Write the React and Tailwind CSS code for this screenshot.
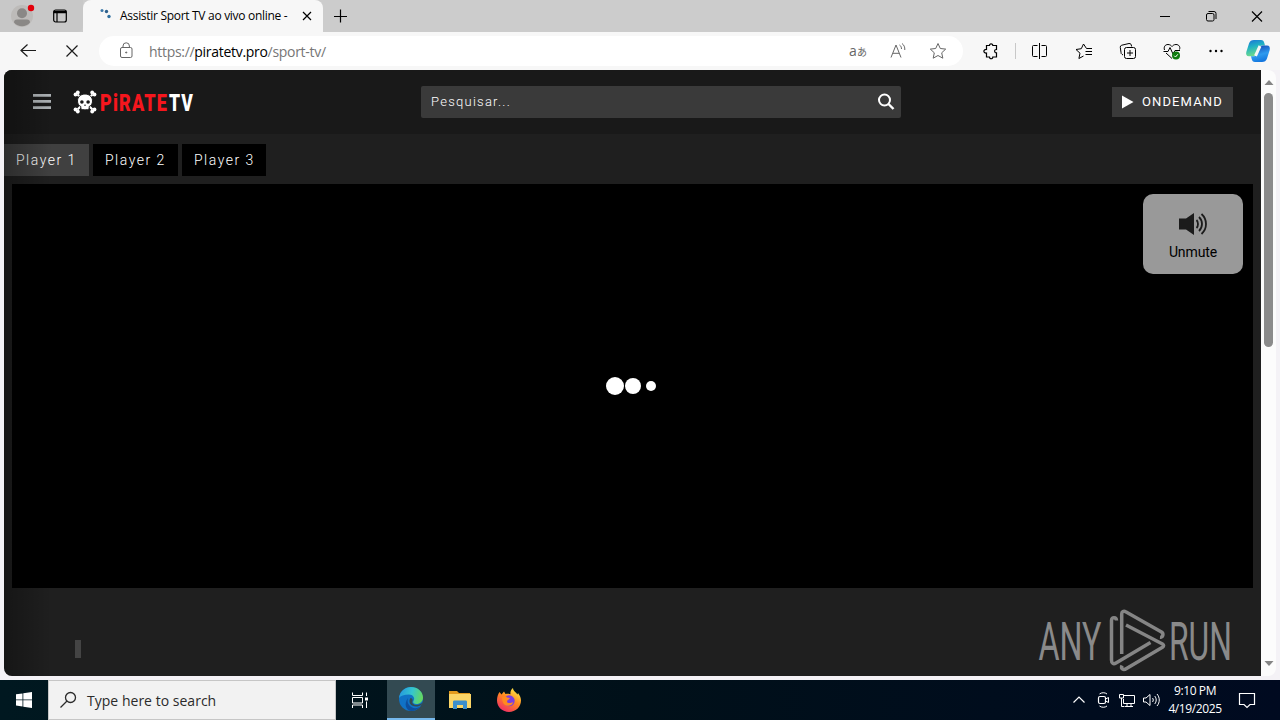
function Icon({ size = 20, className = "", children }) {
  return (
    <svg
      width={size}
      height={size}
      viewBox={`0 0 ${size} ${size}`}
      fill="none"
      stroke="currentColor"
      className={`shrink-0 ${className}`}
    >
      {children}
    </svg>
  );
}

function TabStrip() {
  return (
    <div className="flex h-8 bg-[#cccccc]">
      <div className="flex w-[83px] items-center rounded-br-md bg-[#c8c8c8]">
        <svg width="32" height="32" viewBox="0 0 32 32" className="ml-2">
          <circle cx="14" cy="16" r="11" fill="#bdbbb9" />
          <circle cx="14" cy="13.200" r="5" fill="#8a8886" />
          <path d="M6 22.500c0-2 1-3 3-3h10c2 0 3 1 3 3-2 2.700-5 3.700-8 3.700s-6-1-8-3.700z" fill="#8a8886" />
          <circle cx="23" cy="8" r="3.200" fill="#e3000b" />
        </svg>
        <Icon size={16} className="ml-3 text-black">
          <rect x="1.700" y="2" width="12.600" height="12" rx="2" strokeWidth="1.200" />
          <path d="M1.700 4h12.600" strokeWidth="2.500" />
          <path d="M5 4v10" strokeWidth="1.200" />
        </Icon>
      </div>
      <div className="flex w-[240px] items-center rounded-t-lg bg-[#f7f7f7]">
        <svg width="16" height="16" viewBox="0 0 16 16" className="ml-[15px] shrink-0">
          <circle cx="4" cy="2.500" r="1.500" fill="#3d78a8" />
          <circle cx="8.500" cy="3.500" r="1.700" fill="#2d608c" />
          <circle cx="11" cy="8.500" r="1.700" fill="#2f6f9f" />
        </svg>
        <span className="ml-1.5 w-[176px] text-[12px] tracking-[-0.300px] whitespace-nowrap text-black">
          Assistir Sport TV ao vivo online -
        </span>
        <Icon size={16} className="ml-[3px] text-black">
          <path d="M4 4l8 8M12 4l-8 8" strokeWidth="1.200" />
        </Icon>
      </div>
      <div className="flex w-[34px] items-center justify-center text-black">
        <Icon size={16}>
          <path d="M8.500 1.500v13M2 8.500h13" strokeWidth="1.200" />
        </Icon>
      </div>
      <div className="ml-auto flex text-black">
        {[
          <path key="min" d="M5 10.500h10" />,
          <g key="max">
            <rect x="5.500" y="7.500" width="7.500" height="7.500" rx="1.500" />
            <path d="M7.500 5.500h5.500a2 2 0 0 1 2 2v5.500" />
          </g>,
          <path key="close" d="M5 5.500l10 10M15 5.500l-10 10" strokeWidth="1.200" />,
        ].map((shape) => (
          <div key={shape.key} className="flex w-[46px] items-center justify-center">
            <Icon>{shape}</Icon>
          </div>
        ))}
      </div>
    </div>
  );
}

function CopilotLogo() {
  return (
    <svg width="26" height="24" viewBox="0 0 26 24">
      <defs>
        <linearGradient id="copilotLeft" x1="0" y1="0" x2="0.300" y2="1">
          <stop offset="0" stopColor="#1c6fd8" />
          <stop offset="0.450" stopColor="#1fb0c4" />
          <stop offset="1" stopColor="#6fdc8c" />
        </linearGradient>
        <linearGradient id="copilotRight" x1="0.300" y1="0" x2="0.600" y2="1">
          <stop offset="0" stopColor="#1747b5" />
          <stop offset="0.550" stopColor="#2e9bef" />
          <stop offset="1" stopColor="#1173dd" />
        </linearGradient>
      </defs>
      <path d="M9 1h7c2 0 2.800 1.200 3.300 3l.7 2.500h-3c-2 0-3 1-3.600 3L12 14c-.7 2.200-1.700 3.300-4 3.300H4C1.500 17.300.700 15.500 1.300 13L4 4.500C4.800 2 6.500 1 9 1z" fill="url(#copilotLeft)" />
      <path d="M17 23h-7c-2 0-2.800-1.200-3.300-3L6 17.300h3c2 0 3-1 3.600-3l1.400-4.500c.7-2.200 1.700-3.300 4-3.300h4c2.500 0 3.300 2 2.700 4.500L22 19.500c-.8 2.500-2.500 3.500-5 3.500z" fill="url(#copilotRight)" />
      <path d="M15 7l-4.500 9.800" stroke="#f7f7f7" strokeWidth="3" />
    </svg>
  );
}

const STAR = "M10 2.500l2.300 5 5.400.6-4 3.700 1.100 5.400-4.800-2.700-4.800 2.700 1.100-5.400-4-3.700 5.400-.6z";

const toolbarIcons = [
  <path
    key="split"
    d="M7.500 4.500H3.500a1 1 0 0 0-1 1v9a1 1 0 0 0 1 1h4M11.500 4.500h4a1 1 0 0 1 1 1v9a1 1 0 0 1-1 1h-4M9.500 2v16"
  />,
  <path
    key="favorites"
    d="M18 7.500h-5.500L9.500 3 7.300 7.700 2 8.500l4 3.700-1.100 5.300 4.600-2.500M11.500 10.500H18M11.500 13.500H18"
  />,
  <g key="collections">
    <path d="M5 14l-1-.7a2 2 0 0 1-1-2L2.300 6.500a2 2 0 0 1 1.500-2.300L11 2.500a2 2 0 0 1 2.300 1.500l.3 1.500" />
    <rect x="6.500" y="6.500" width="11" height="11" rx="2" />
    <path d="M12 9v6M9 12h6" />
  </g>,
  <g key="essentials">
    <path d="M2.500 9C1.500 6 3 3.500 6 3.500c2 0 3.200 1 4 2 .8-1 2-2 4-2 3 0 4.500 2.500 3.500 5M4 12l6 5.500M1.500 10.500H6l2-4 3 6.500 2-3.500h5" />
    <circle cx="14" cy="14.500" r="4" fill="#107c10" stroke="none" />
    <path d="M12.200 14.700l1.300 1.300 2.300-2.700" stroke="white" />
  </g>,
  <g key="more" fill="currentColor" stroke="none">
    <circle cx="4.500" cy="10" r="1.200" />
    <circle cx="10" cy="10" r="1.200" />
    <circle cx="15.500" cy="10" r="1.200" />
  </g>,
];

function Toolbar() {
  return (
    <div className="flex h-[38px] items-center bg-[#f7f7f7] text-[#1b1b1b]">
      <Icon className="ml-[18px]">
        <path d="M18 9.500H3M9.500 3.500L3 9.500l6.500 6" strokeWidth="1.200" />
      </Icon>
      <Icon className="ml-6">
        <path d="M4.500 4.500l11 11M15.500 4.500l-11 11" strokeWidth="1.200" />
      </Icon>
      <div className="ml-[17px] flex h-[30px] w-[864px] items-center rounded-full bg-white text-[#666]">
        <Icon className="ml-[17px]">
          <rect x="4.500" y="6.500" width="11.500" height="10" rx="1.500" />
          <path d="M7 6.500V5a3.200 3.200 0 0 1 6.400 0v1.500" />
          <circle cx="10.200" cy="11.500" r=".6" fill="currentColor" />
        </Icon>
        <span className="ml-[13px] text-[14px] tracking-[-0.300px] text-[#767676]">
          https://<span className="text-black">piratetv.pro</span>/sport-tv/
        </span>
        <span className="ml-auto flex w-5 items-baseline justify-center text-[14px] leading-5">
          a<span className="font-['Noto_Sans_CJK_JP',sans-serif] text-[10px]">あ</span>
        </span>
        <Icon className="ml-5">
          <path d="M3 16.500L8 4l5 12.500M5 12.300h6M11.500 4c1.500 1 2 2.300 2 4M14 2.500c2 1.500 3 3.500 2.800 6.500" />
        </Icon>
        <Icon className="mr-[15px] ml-5">
          <path d={STAR} />
        </Icon>
      </div>
      <Icon className="ml-[18px] text-black">
        <path d="M5.500 4.500h3c-.3-2 3.300-2.500 3.300 0h3.700v4c-2.500-.3-2.500 3.500 0 3.300v4.200h-3.700c.2 2.300-3.500 2.300-3.300 0h-3v-4c-3.500.5-3.500-4 0-3.500z" strokeWidth="1.200" />
      </Icon>
      <div className="ml-[14px] h-4 w-px bg-[#c8c8c8]" />
      <div className="flex text-black">
        {toolbarIcons.map((shape) => (
          <div key={shape.key} className="flex w-11 justify-center first:ml-0.5">
            <Icon>{shape}</Icon>
          </div>
        ))}
      </div>
      <div className="ml-[7px]">
        <CopilotLogo />
      </div>
    </div>
  );
}

function SkullLogo() {
  return (
    <svg width="24" height="24" viewBox="0 0 24 24" fill="white" className="shrink-0">
      <path d="M4.500 4.500l15 15M19.500 4.500l-15 15" stroke="white" strokeWidth="2.200" />
      <circle cx="2.500" cy="4.500" r="1.900" />
      <circle cx="4.800" cy="2.500" r="1.900" />
      <circle cx="21.500" cy="4.500" r="1.900" />
      <circle cx="19.200" cy="2.500" r="1.900" />
      <circle cx="2.500" cy="19.500" r="1.900" />
      <circle cx="4.800" cy="21.500" r="1.900" />
      <circle cx="21.500" cy="19.500" r="1.900" />
      <circle cx="19.200" cy="21.500" r="1.900" />
      <path d="M12 4c-4.500 0-7.500 3-7.500 7 0 2.800 1.200 4.600 3.300 5.500v2.500c1.500 1.200 6.900 1.200 8.400 0v-2.500c2.100-.9 3.300-2.700 3.300-5.500 0-4-3-7-7.500-7z" stroke="#191919" />
      <circle cx="8.900" cy="12" r="1.800" fill="#191919" />
      <circle cx="15.100" cy="12" r="1.800" fill="#191919" />
      <path d="M12 14l1 1.800h-2z" fill="#191919" />
    </svg>
  );
}

function SiteHeader() {
  return (
    <header className="flex h-16 items-center bg-[#191919] text-white">
      <svg width="18" height="16" viewBox="0 0 18 16" fill="#adb2b5" className="ml-[29px]">
        <path d="M0 0h18v2.700H0zM0 6h18v2.800H0zM0 12.200h18V15H0z" />
      </svg>
      <div className="ml-[22px] flex h-6 w-[122px] items-center font-['Roboto',sans-serif] font-black">
        <SkullLogo />
        <svg width="69" height="30" viewBox="0 0 69 30" className="ml-[3px] shrink-0 overflow-visible">
          <text x="0" y="24" fontSize="24" fill="#f5161d" letterSpacing="1.500" textLength="68" lengthAdjust="spacingAndGlyphs">
            PiRATE
          </text>
        </svg>
        <svg width="25" height="30" viewBox="0 0 25 30" className="shrink-0 overflow-visible">
          <text x="0" y="24" fontSize="24" fill="white" letterSpacing="1.500" textLength="25" lengthAdjust="spacingAndGlyphs">
            TV
          </text>
        </svg>
      </div>
      <div className="ml-[226px] flex h-8 w-[480px] items-center justify-between rounded-[2px] bg-[#3a3a3a] pr-1.5 pl-2.5 font-['Roboto',sans-serif] text-[13px] font-light tracking-[1.250px]">
        <span>Pesquisar...</span>
        <Icon size={18}>
          <circle cx="7.500" cy="7" r="5.500" strokeWidth="2" />
          <path d="M11.500 11l5 5" strokeWidth="2.400" />
        </Icon>
      </div>
      <button className="mr-7 ml-auto flex h-[30px] w-[121px] items-center bg-[#3a3a3a] font-['Roboto',sans-serif] text-[13px] tracking-[1.120px]">
        <svg width="12" height="14" viewBox="0 0 12 14" fill="white" className="mr-2 ml-2.5">
          <path d="M0 .5L11.500 7 0 13.500z" />
        </svg>
        ONDEMAND
      </button>
    </header>
  );
}

function Watermark() {
  return (
    <svg
      width="194"
      height="66"
      viewBox="0 0 194 66"
      className="overflow-visible font-['Roboto',sans-serif]"
      fill="#8a8a8a"
    >
      <text x="0.500" y="50.500" fontSize="53" textLength="63" lengthAdjust="spacingAndGlyphs">
        ANY
      </text>
      <g fill="none" stroke="#858585" strokeWidth="3.500" strokeLinejoin="round">
        <path d="M78.500 11.500c0-3.500-5-4-5 0V51c0 3.500 2 4.500 4.500 3L112.500 33.500" />
        <path d="M83.700 45V5c0-2.500 2-3.500 4-2.300L123.500 23c2.500 1.700 1.500 5.500-1.500 5.200" />
        <path d="M88 16l36.500 19c1.500 1 1.500 2.200 0 3.200L88.500 59.500c-3 2-6 .5-4.500-3" />
      </g>
      <text x="131" y="50.500" fontSize="53" textLength="63" lengthAdjust="spacingAndGlyphs">
        RUN
      </text>
    </svg>
  );
}

function Page() {
  return (
    <main className="relative h-[606px] w-[1257px] overflow-hidden rounded-tl-lg rounded-bl-lg bg-[#1f1f1f]">
      <SiteHeader />
      <div className="mt-2.5 flex gap-1 font-['Roboto',sans-serif] text-[14px] font-light tracking-[1.500px] text-white">
        {["Player 1", "Player 2", "Player 3"].map((name, i) => (
          <button
            key={name}
            className={`h-8 pl-3 text-left whitespace-nowrap ${i === 0 ? "bg-[#404040]" : "bg-black"} ${i === 2 ? "w-[84px]" : "w-[85px]"}`}
          >
            {name}
          </button>
        ))}
      </div>
      <div className="mx-2 mt-2 flex h-[404px] items-center justify-center bg-black">
        <div className="flex items-center pr-[3px]">
          <div className="size-[18px] rounded-full bg-white" />
          <div className="ml-px size-4 rounded-full bg-white" />
          <div className="ml-[5px] size-2.5 rounded-full bg-white" />
        </div>
      </div>
      <div className="flex justify-between pr-[29px] pl-[71px]">
        <div className="mt-[52px] h-[18px] w-1.5 bg-[#444]" />
        <div className="mt-[21px]">
          <Watermark />
        </div>
      </div>
      {/* mute control floats over the player */}
      <button className="absolute top-[124px] right-[18px] flex h-20 w-[100px] flex-col items-center rounded-[10px] bg-[#999] pt-[18px] text-[14px] text-black">
        <svg width="30" height="24" viewBox="0 0 30 24" className="shrink-0">
          <path d="M1 6.500h7l8-5.500v22l-8-5.500H1z" fill="#1b1b1b" />
          <path
            d="M18.500 8c2 2 2 6 0 8M21 5c4 4 4 10 0 14M23.500 2c6 5.500 6 14.500 0 20"
            fill="none"
            stroke="#1b1b1b"
            strokeWidth="1.800"
          />
        </svg>
        <span className="mt-[5px] font-['Roboto',sans-serif] leading-[22px] tracking-[-0.100px]">Unmute</span>
      </button>
      <div className="absolute inset-y-0 left-0 w-12 bg-linear-to-r from-black/30 to-transparent" />
    </main>
  );
}

function Scrollbar() {
  return (
    <div className="flex w-[15px] flex-col items-center rounded-r-lg bg-[#fcfcfc] pt-2.5">
      <svg width="10" height="6" viewBox="0 0 10 6" fill="#858585">
        <path d="M5 0l4.500 5h-9z" />
      </svg>
      <div className="mt-[7px] h-[254px] w-[9px] rounded-full bg-[#8b8b8b]" />
      <svg width="10" height="6" viewBox="0 0 10 6" fill="#858585" className="mt-auto mb-[9px]">
        <path d="M5 5l4.500-5h-9z" />
      </svg>
    </div>
  );
}

function EdgeLogo() {
  return (
    <svg width="26" height="26" viewBox="0 0 26 26">
      <defs>
        <linearGradient id="edgeTop" x1="0" y1="0.400" x2="1" y2="0.600">
          <stop offset="0" stopColor="#2599de" />
          <stop offset="0.500" stopColor="#35c5cf" />
          <stop offset="1" stopColor="#68d958" />
        </linearGradient>
      </defs>
      <circle cx="13" cy="13" r="12" fill="#1072c6" />
      <path d="M1 12C2 5 7 1 13 1c7 0 12 5 12 10.500 0 4-3 6.500-6.500 6.500-3 0-4-1.500-3-3 2-3-.5-6.500-4.500-6.500C6 8.500 2.500 10 1 12z" fill="url(#edgeTop)" />
      <path d="M10 12c-2 6 3 11 9 10 2-.3 3.500-1.500 4.300-2.500C21 23 17 25 13 25 8 24 5.500 18 10 12z" fill="#0e4f9e" />
      <path d="M14.500 15c-1 2 1 4 4 4 2.500 0 4.500-1 6-2.500L23.500 19c-3 2-9 2.500-11.500-1.500-1-2-.5-4 .5-5.500 1.500 0 2.500 1.500 2 3z" fill="#334a52" />
    </svg>
  );
}

function FolderLogo() {
  return (
    <svg width="24" height="20" viewBox="0 0 24 20">
      <path d="M1 1h8l2 2h11v4H1z" fill="#e39b1d" />
      <path d="M1 4h22v14H1z" fill="#fbd566" />
      <path d="M5 19v-7c0-1 .5-1.500 1.500-1.500h11c1 0 1.500.5 1.500 1.500v7h-4v-4H9v4z" fill="#3c8ecb" />
    </svg>
  );
}

function FirefoxLogo() {
  return (
    <svg width="26" height="26" viewBox="0 0 26 26">
      <defs>
        <linearGradient id="foxBody" x1="0.800" y1="0" x2="0.200" y2="1">
          <stop offset="0" stopColor="#fff04a" />
          <stop offset="0.450" stopColor="#ff8a1f" />
          <stop offset="1" stopColor="#f0256b" />
        </linearGradient>
      </defs>
      <path d="M3.500 5l2 2.500L8 4.500 9.500 7c2-.5 3.500-.3 5 .3C14 5 15 2.500 17 1c0 3 3 4 4.500 6.500L22 6c2 2.500 3 5 3 7.500C25 20 19.500 25 13 25S1 20 1 13.500C1 10 2 7 3.500 5z" fill="url(#foxBody)" />
      <circle cx="13.200" cy="13.800" r="5.500" fill="#7a3ee0" />
      <path d="M6 10c2-1 4-1 5 .5l3 .5c-.5 1.500-3 2-3 3.500 0 2 4 2 6 .5 0 4-7 5.500-9.500 1.500C6.500 15 6 12 6 10z" fill="#ff8a1f" />
    </svg>
  );
}

function Taskbar() {
  return (
    <div className="flex h-10 bg-linear-to-r from-[#001820] via-[#001019] to-[#000a20] text-white">
      <div className="flex w-12 items-center justify-center">
        <svg width="16" height="16" viewBox="0 0 16 16" fill="white">
          <path d="M0 2.300L6.500 1.400v6.100H0zM7.300 1.300L16 0v7.500H7.300zM0 8.300h6.500v6.200L0 13.600zM7.300 8.300H16V16l-8.700-1.300z" />
        </svg>
      </div>
      <div className="flex w-72 items-center border border-[#c6c6c6] bg-[#f2f2f2] text-[#2b2b2b]">
        <Icon size={18} className="ml-2.5">
          <circle cx="11.500" cy="6.500" r="5" strokeWidth="1.300" />
          <path d="M8 10l-6.500 6.500" strokeWidth="1.300" />
        </Icon>
        <span className="ml-2.5 text-[14px] tracking-[0.020px]">Type here to search</span>
      </div>
      <div className="flex w-[51px] items-center justify-center pr-1">
        <Icon size={18}>
          <path d="M1.500 1.500v3h10v-3M1.500 17v-3h10v3M1.500 6.500h10v5.500h-10zM15.500 1.500v3.500M15.500 10.500v6.500" />
          <rect x="14" y="6.500" width="3" height="3" fill="white" stroke="none" />
        </Icon>
      </div>
      <div className="flex w-12 items-center justify-center border-b-2 border-[#76b9ed] bg-[#334a52]">
        <EdgeLogo />
      </div>
      <div className="flex w-[49px] items-center justify-center">
        <FolderLogo />
      </div>
      <div className="flex w-[49px] items-center justify-center">
        <FirefoxLogo />
      </div>
      <div className="mr-6 ml-auto flex items-center">
        <Icon size={16}>
          <path d="M2.500 10.500L8 5l5.500 5.500" strokeWidth="1.200" />
        </Icon>
        <Icon size={16} className="ml-2">
          <rect x="3.500" y="4.500" width="7" height="7" rx="1.500" strokeWidth="1.200" />
          <path d="M10.500 7l3-1.500v5l-3-1.500M4.500 2c2-1.700 5.500-1.700 7.500 0M4.500 14c2 1.700 5.500 1.700 7.500 0" />
        </Icon>
        <Icon size={18} className="ml-[7px]">
          <path d="M5.500 4.500h11v8h-11V8M9 12.500v3M13 12.500v3M7 15.500h8M1.500 3.500h4v3.500h-4zM3.500 7v8.500h3" />
        </Icon>
        <Icon size={18} className="ml-1.5">
          <path d="M1.500 7h2.500l4-3.500v11L4 11H1.500zM10.500 7c1 1.200 1 2.800 0 4M12.700 5c2 2.300 2 5.700 0 8M15 3c3 3.500 3 8.500 0 12" />
        </Icon>
        <div className="ml-[2px] w-[66px] text-center text-[12px] leading-[18px] tracking-[-0.400px] whitespace-nowrap">
          <div>9:10 PM</div>
          <div>4/19/2025</div>
        </div>
        <Icon size={18} className="ml-2.5">
          <path d="M1.500 2.500h15v11H12l-3 3-3-3H1.500z" strokeWidth="1.200" />
        </Icon>
      </div>
    </div>
  );
}

export default function App() {
  return (
    <div className="flex h-[720px] w-[1280px] flex-col overflow-hidden bg-[#f4f2f6] font-['Open_Sans',sans-serif]">
      <TabStrip />
      <Toolbar />
      <div className="mb-1 flex pl-1">
        <Page />
        <Scrollbar />
      </div>
      <Taskbar />
    </div>
  );
}
